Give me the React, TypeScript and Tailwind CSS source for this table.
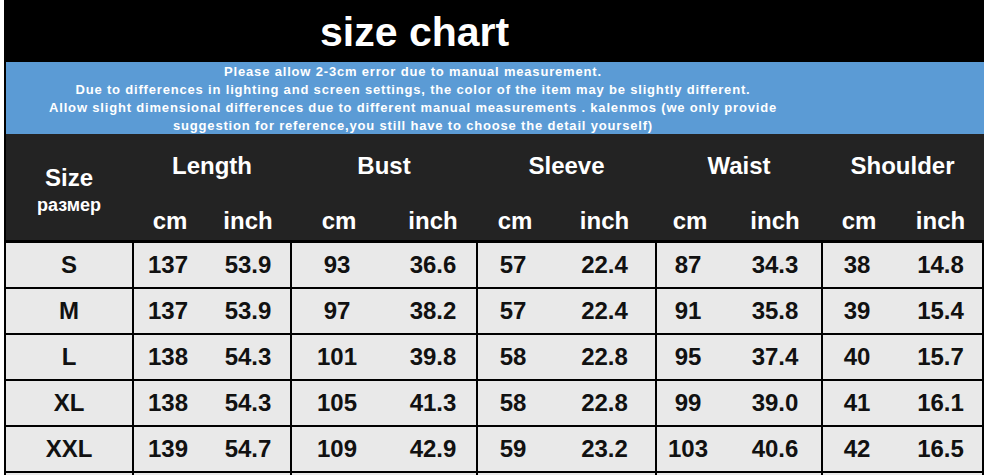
const groups = [
  { title: "Length", cols: "grid-cols-[68px_88px]", inch: "pl-[4px]" },
  { title: "Bust", cols: "grid-cols-[90px_94px]", inch: "pl-[8px]" },
  { title: "Sleeve", cols: "grid-cols-[70px_107px]", inch: "pl-[6px]" },
  { title: "Waist", cols: "grid-cols-[62px_102px]", inch: "pl-[10px]" },
  { title: "Shoulder", cols: "grid-cols-[68px_91px]", inch: "pl-[8px]" },
];

const rows: [string, string[]][] = [
  ["S", ["137", "53.9", "93", "36.6", "57", "22.4", "87", "34.3", "38", "14.8"]],
  ["M", ["137", "53.9", "97", "38.2", "57", "22.4", "91", "35.8", "39", "15.4"]],
  ["L", ["138", "54.3", "101", "39.8", "58", "22.8", "95", "37.4", "40", "15.7"]],
  ["XL", ["138", "54.3", "105", "41.3", "58", "22.8", "99", "39.0", "41", "16.1"]],
  ["XXL", ["139", "54.7", "109", "42.9", "59", "23.2", "103", "40.6", "42", "16.5"]],
  ["", ["", "", "", "", "", "", "", "", "", ""]],
];

const tableCols = "grid-cols-[126px_156px_184px_177px_164px_159px]";

export default function App() {
  return (
    <div className="h-[475px] w-[988px] overflow-hidden bg-white font-['Liberation_Sans',Arial,sans-serif]">
      <div className="ml-[4px] w-[980px] bg-black">
        {/* Title */}
        <div className="h-[62px] pl-[316px] pt-[9px] text-[41px] font-bold leading-[46px] text-white">
          size chart
        </div>

        {/* Notice band */}
        <div className="ml-[2px] h-[72px] bg-[#5b9bd5] pt-[1px]">
          <div className="w-[814px] text-center text-[13px] font-bold leading-[18px] tracking-[0.82px] text-white">
            <p>Please allow 2-3cm error due to manual measurement.</p>
            <p>Due to differences in lighting and screen settings, the color of the item may be slightly different.</p>
            <p>Allow slight dimensional differences due to different manual measurements . kalenmos (we only provide</p>
            <p>suggestion for reference,you still have to choose the detail yourself)</p>
          </div>
        </div>

        {/* Header */}
        <div className={`ml-[2px] grid h-[106px] ${tableCols} gap-x-[2px] bg-[#232323] text-[24px] font-bold text-white`}>
          <div className="flex flex-col items-center justify-center pt-[8px]">
            <span className="leading-[28px]">Size</span>
            <span className="text-[18px] leading-[26px]">размер</span>
          </div>
          {groups.map((g) => (
            <div key={g.title} className="grid grid-rows-[64px_42px]">
              <div className="flex items-center justify-center">{g.title}</div>
              <div className={`grid ${g.cols}`}>
                <div className="flex items-start justify-center pt-[5px] pl-[4px]">cm</div>
                <div className={`flex items-start justify-center pt-[5px] ${g.inch}`}>inch</div>
              </div>
            </div>
          ))}
        </div>

        {/* Rows */}
        <div className="flex flex-col gap-y-[2px] px-[2px] pt-[3px]">
          {rows.map(([size, vals], i) => (
            <div key={i} className={`grid h-[44px] ${tableCols} gap-x-[2px] text-[24px] font-bold text-[#111]`}>
              <div className="flex items-center justify-center bg-[#e9e9e9]">{size}</div>
              {groups.map((g, gi) => (
                <div key={g.title} className={`grid ${g.cols} bg-[#e9e9e9]`}>
                  <div className="flex items-center justify-center">{vals[gi * 2]}</div>
                  <div className={`flex items-center justify-center ${g.inch}`}>{vals[gi * 2 + 1]}</div>
                </div>
              ))}
            </div>
          ))}
        </div>
      </div>
    </div>
  );
}
